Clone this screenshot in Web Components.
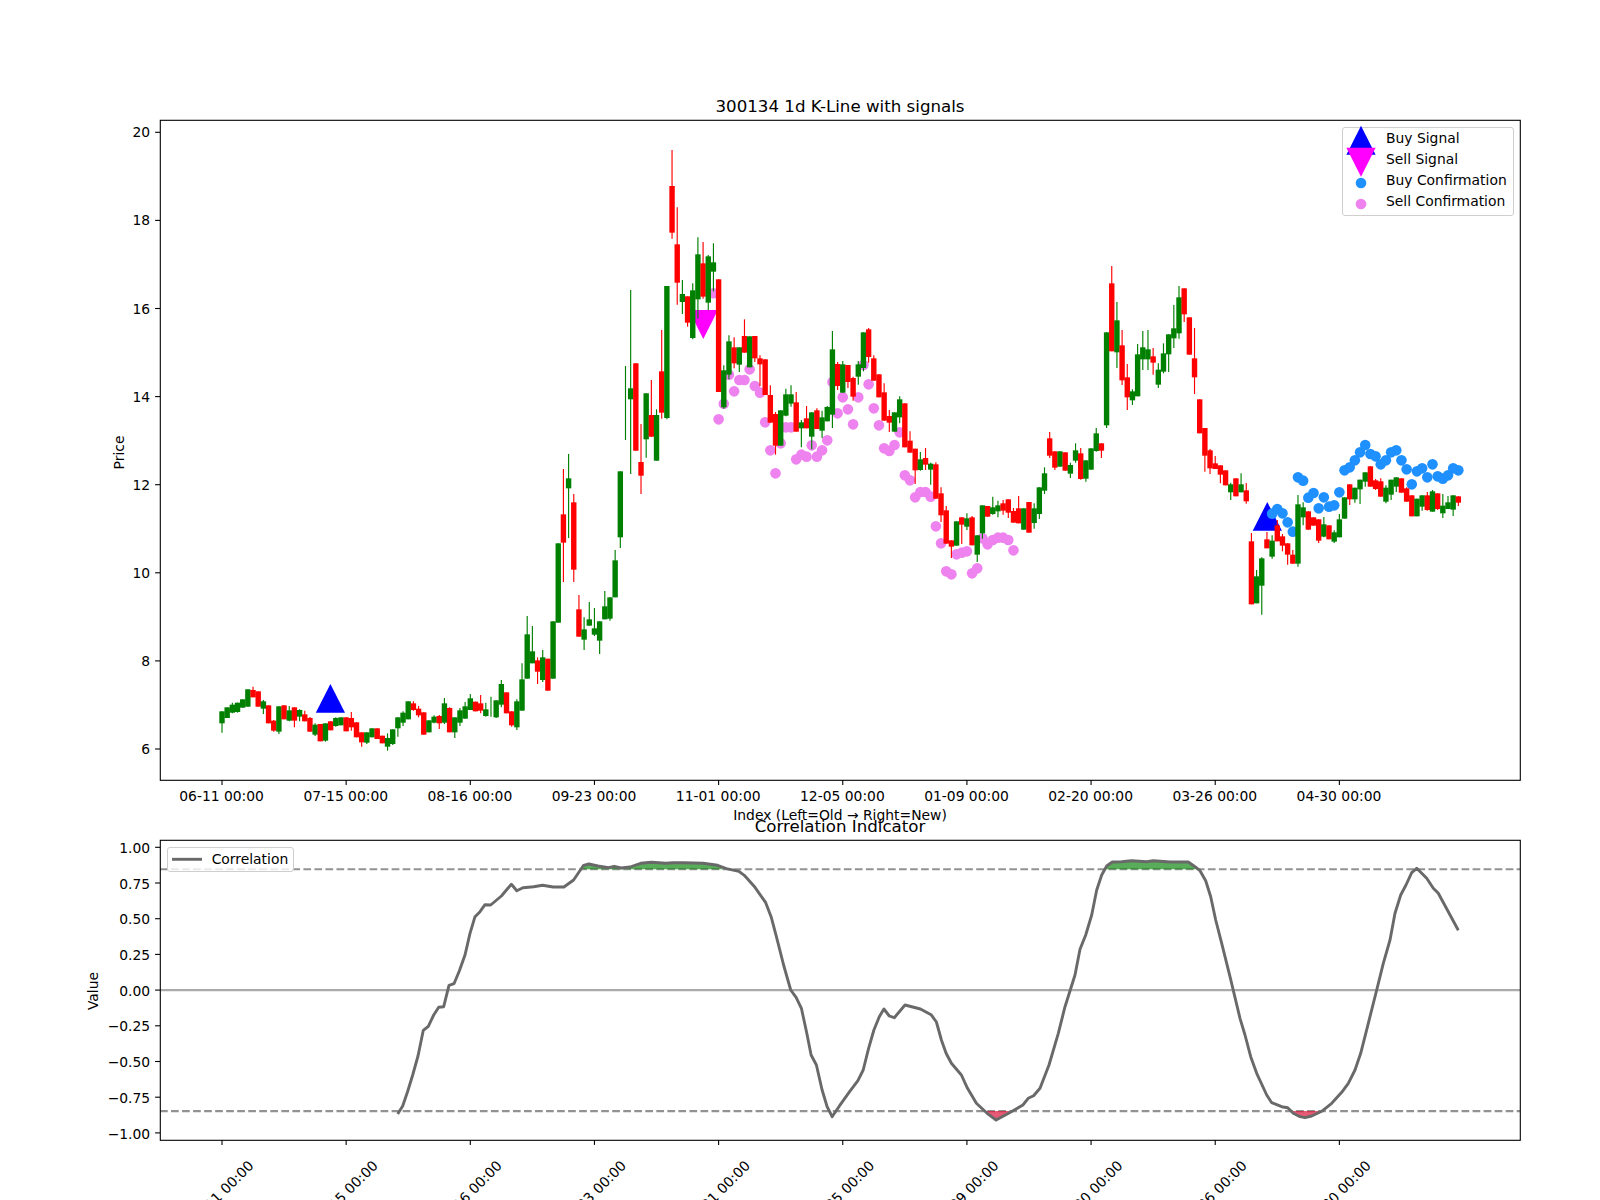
<!DOCTYPE html>
<html lang="en">
<head>
<meta charset="utf-8">
<title>300134 1d K-Line with signals</title>
<style>
html,body{margin:0;padding:0;background:#fff;overflow:hidden}
body{font-family:"DejaVu Sans",sans-serif;color:#000}
</style>
</head>
<body>
<chart-figure>
  <kline-panel>
    <chart-legend style="left:1342.3px;top:127.3px;width:171.7px;height:88.4px;--item-pad:3px">
      <legend-item marker="buy">Buy Signal</legend-item>
      <legend-item marker="sell">Sell Signal</legend-item>
      <legend-item marker="buydot">Buy Confirmation</legend-item>
      <legend-item marker="selldot">Sell Confirmation</legend-item>
    </chart-legend>
  </kline-panel>
  <corr-panel>
    <chart-legend style="left:167.3px;top:17.3px;width:126.7px;height:24.7px;--item-pad:3.7px;--legend-top:.4px">
      <legend-item marker="line">Correlation</legend-item>
    </chart-legend>
  </corr-panel>
</chart-figure>
<script>
const NS='http://www.w3.org/2000/svg';
const FONT='"DejaVu Sans",sans-serif';
const X=i=>222+5.173*i;
const TICK_LABELS=['06-11 00:00','07-15 00:00','08-16 00:00','09-23 00:00','11-01 00:00','12-05 00:00','01-09 00:00','02-20 00:00','03-26 00:00','04-30 00:00'];

/* candle data: colour, body top, body bottom, [wick top, wick bottom], read from the picture; base + z/scale */
const SEGMENTS=[
 [0,500,3,`G634 670 634 698,G622 654,G614 638 608 640,G608 636 608 638,G598 623,G568 620,R570 592 560 592,R574 620,G604 626 600 642,R616 670,R662 692 660 695,G619 695 619 702,R616 658,G631 662 618 664,R622 662 622 682,G630 650 628 664,R643 664 632 664,R654 695 651 695,G674 704 670 708,R672 724,G670 722 670 725,R664 691,G654 678 652 680,G652 676,R652 694,R654 682 636 692,R667 712,R697 727 697 740,G697 728 697 732,G685 712,R685 717,R707 730,G714 740 700 752,G688 732 688 735,G652 685 652 710,G638 668 634 678,G604 658,R610 630 604 632,R626 646 618 652,R637 704,G661 697,G650 668 646 670,R648 670 645 687,G610 668 594 672,R624 697 622 697,G652 697 652 714,G631 668 624 678,G619 656 606 656,G595 630 582 630,R605 634,R610 632 585 640,G628 648 608 650,G650 650 590 650,G601 652 601 654,G552 614 540 622,R577 640,R634 676 634 680,G604 682 598 690,G538 632 490 632,G403 536 348 536,G454 490 378 490,R481 515 472 552,G472 540 450 546,R476 572`],
 [64,400,3,`G664 836,G430 668,R343 428 207 546,G235 265 162 414,R307 509 282 546,R628 710 585 710,G688 719 652 750,G658 677 606 677,G685 704 624 708,G664 722 664 762,G619 658 573 658,G592 656 592 662,G481 592 450 592,G214 412 214 444`],
 [78,0,1,`G403 403 366 440,G388.3 399.3 290 474,R363.3 450.7,R462 475.7 424 494,G393.3 439.3 393.3 457.7,R415 436.7 380 436.7,G415 460.7 409.3 460.7`],
 [85,130,3,`R724 848 600 866,G468 864 468 868,R168 308 60 326,R343 458 232 524,G492 516 450 552,R499 578 499 590,G481 624 460 628,G373 508 322 566,R400 500 336 506,G379 518 375 540,G397 425 340 484,R448 786,G721 832 706 836,G634 734 616 748,R652 700 622 715,G652 704 652 726,R618 668 568 668,G619 712,R618 685 618 696,R685 703 676 768,R688 795,R795 878 766 878`],
 [107,280,3,`R402 497 396 524,G391 497,G343 407 326 409,G343 371 316 380,R367 455 336 455,G427 445 420 502,R415 445 378 445,G397 470 397 508,R391 447 385 447,G412 452 392 474,G381 424 378 424,G208 404 153 444,R252 318 246 330,G253 338 243 338,R255 306 255 324,R294 350 290 362,G253 290 243 314,G157 264 157 274,R148 231 144 248,R235 302 226 302,R283 352,R337 422 310 422,R408 428 390 456,G397 455,G358 412 349 430,R370 502,R482 518 454 518,R506 571 506 612,G538 570 516 572,R534 554 504 570,G551 569 548 614,R553 656 547 656,R640 706 622 726,R691 791 678 791,R781 800 781 834,G724 797,R712 734 712 792,G715 740 700 750,R712 796 708 796,G766 824 766 846`],
 [147,380,3,`G376 460 376 476,R378 410,G382 402 350 404,G376 394 362 412,R370 392 360 404,R358 398 358 414,R393 428 384 428,R385 430 348 430,G385 449,R366 458,G385 429 370 446,G322 402 322 417,G280 332 262 342,R175 227 156 234,R214 263 214 270,G214 260,R217 272,G255 281 248 294,G211 242 190 248,R220 297 204 299,G241 296 241 305,G205 269,G160 213 144 215,R190 212 190 234`],
 [171,250,3,`G247 526 247 534,R100 304 48 304,G211 307 156 354,R286 391 240 405,R382 442 342 480,G424 451 418 465,G313 439 282 439,G292 328 243 360,G298 328 240 360,R319 338 294 374,G359 404 340 414,G310 365 280 370,G253 313 253 366,G235 265 165 294,G142 250 108 266,R115 193 115 216,R202 314,R325 382 234 432,R448 550,R534 617 534 665,R601 655 597 672,R640 657 618 657,R646 674 646 700,R661 706,G703 727 698 750,R685 739,G703 727 670 727,R721 754 699 761`],
 [199,420,3,`R364 553 339 553,G469 550 450 550,G415 497 412 584,R358 385 336 385,G362 410 346 416,R316 364 300 364,R349 377 342 394,R370 404 370 434,R404 431 390 431,G253 431 225 440,G262 292 247 316,R274 329,R292 317,R298 362 298 369,G313 350 291 352,R316 358,G337 365 331 369,G298 352 282 352,G232 296,R193 238 193 255,G203 238 203 248,G179 208 179 252,G157 185 157 200,R139 200,R181 207 177 210,R184 230 175 230,G203 245 196 250,G179 224 179 240,G172 200 172 216,R175 218,R205 245 202 245,R226 289,G236 289,G226 260 226 272,R226 270 216 272,G214 275 210 275,R220 267 220 270,G257 280 222 294,G247 267 228 267,G226 269 226 288,R229 248 229 258`]
];
const candles=[];
for(const [start,base,scale,text] of SEGMENTS){
  text.split(',').forEach((entry,k)=>{
    const n=entry.slice(1).split(' ').map(v=>base+parseFloat(v)/scale);
    candles.push({i:start+k,red:entry[0]==='R',bt:n[0],bb:n[1],wt:n.length>2?n[2]:n[0],wb:n.length>2?n[3]:n[1]});
  });
}

/* Sell confirmation dots: i, y */
const sellDots=[[95,293.3]];
`418 371 284 334 300 300 268 318 338 427 511 580 490 442 442 538 524 530 496 530 511 481 306 400 352 388 433 352 255 313 385 436 505 513 495 457 586 601 652 636 636 650 739 790 874 883 823 818 814 880 865 775 793 780 773 773 780 811`
  .split(' ').forEach((z,k)=>sellDots.push([96+k,280+z/3]));
/* Buy confirmation dots */
const buyDots=[];
`281 267 280 307 335 172 182 233 219 265 232 260 256 217 151 142 121 97 75 102 109 133 121 97 91 121 148 193 154 145 172 133 169 176 166 145 151`
  .split(' ').forEach((z,k)=>buyDots.push([203+k,420+z/3]));

/* Correlation line */
const corrPts=[];
const addPts=(x0,sx,str)=>str.trim().split(/\s+/).forEach(p=>{const [a,b]=p.split(',').map(Number);corrPts.push([x0+a/sx,790+b/3]);});
[[953,1032],[968,1008],[983,964],[998,915],[1014,858],[1030,781],[1045,769],[1061,735],[1076,712],[1091,710],[1107,646],[1122,641],[1138,603],[1155,555],[1170,490],[1185,440]]
  .forEach(([a,b])=>corrPts.push([80+a/3,770+b/3]));
addPts(480,2.8,`0,365 14,344 30,345 60,318 78,295 88,283 103,302 120,293 150,290 175,286 205,291 235,291 262,270 290,226 305,222 330,228 360,233 376,229 395,234 420,231 450,220 480,217 520,220 540,218 570,218 625,220 665,226 690,236 725,244 740,256 770,292 800,338 815,380 830,440 850,525 870,600 885,622 900,655 915,730 927,795 942,825 958,900 972,950 986,980 1005,950 1035,905 1058,872 1073,840 1088,775 1103,720 1118,680 1131,657 1146,678 1160,683 1190,645 1233,657 1263,674 1278,696 1292,750 1305,790 1320,820 1348,855 1365,895 1390,940 1420,970 1445,990 1480,970 1520,945 1535,925 1550,917`);
addPts(1040,3,`0,895 27,825 55,730 75,650 105,555 120,478 137,435 155,375 170,300 185,255 200,228 217,216 245,215 275,212 320,215 340,212 390,216 445,216 465,230 480,242 497,272 512,320 527,390 545,460 570,560 600,685 615,735 632,800 650,850 680,915 695,938 725,950 743,953 760,970 780,980 795,983 815,978 845,964 875,940 905,907 925,880 945,840 962,790 985,700 1010,600 1030,520 1050,450 1065,370 1082,315 1098,285 1115,248 1130,235 1145,250 1160,265 1180,295 1195,310 1225,365 1255,421`);

function el(name,attrs,text){
  const e=document.createElementNS(NS,name);
  for(const k in attrs)e.setAttribute(k,attrs[k]);
  if(text!=null)e.textContent=text;
  return e;
}
function frameAndTicks(svg,top,bottom,yTicks,xLabels,labelDy){
  /* y ticks */
  yTicks.forEach(([label,y])=>{
    svg.append(el('line',{x1:155.1,x2:160,y1:y,y2:y,stroke:'#000','stroke-width':1.1}));
    svg.append(el('text',{x:150.2,y:y+labelDy,'text-anchor':'end'},label));
  });
  for(let k=0;k<10;k++){
    const x=X(24*k);
    svg.append(el('line',{x1:x,x2:x,y1:bottom,y2:bottom+4.9,stroke:'#000','stroke-width':1.1}));
    xLabels(svg,x,TICK_LABELS[k]);
  }
}
function frameRect(svg,top,bottom){
  svg.append(el('rect',{x:160.3,y:top+.3,width:1360,height:bottom-top,fill:'none',stroke:'#000','stroke-width':1.1}));
}
const panelStyle=`<style>
:host{display:block;position:relative}
svg{display:block;overflow:visible;font-family:${FONT};font-size:13.89px;fill:#000}
</style>`;

class ChartFigure extends HTMLElement{
  constructor(){super();
    this.attachShadow({mode:'open'}).innerHTML=`<style>
:host{display:flex;flex-direction:column;width:1600px;height:1200px;background:#fff;overflow:hidden}
</style><slot></slot>`;}
}
class KlinePanel extends HTMLElement{
  constructor(){super();
    const r=this.attachShadow({mode:'open'});
    r.innerHTML=panelStyle+`<style>:host{height:830px;flex:none}</style><svg width="1600" height="830" viewBox="0 0 1600 830"></svg><slot></slot>`;
    const svg=r.querySelector('svg');
    svg.append(el('text',{x:840,y:111.7,'text-anchor':'middle','font-size':'16.67'},'300134 1d K-Line with signals'));
    svg.append(el('text',{x:840,y:820,'text-anchor':'middle'},'Index (Left=Old → Right=New)'));
    svg.append(el('text',{x:0,y:0,'text-anchor':'middle',transform:'translate(124,452.5) rotate(-90)'},'Price'));
    /* signals */
    const tri=(x,yBase,yTip,c)=>svg.append(el('polygon',{points:`${x-14.6},${yBase} ${x+14.6},${yBase} ${x},${yTip}`,fill:c}));
    tri(330.4,712.7,684,'#0000ff');
    tri(1267.3,530.7,502,'#0000ff');
    tri(703.3,310,339,'#ff00ff');
    buyDots.forEach(([i,y])=>svg.append(el('circle',{cx:X(i),cy:y,r:5.3,fill:'#1e90ff'})));
    sellDots.forEach(([i,y])=>svg.append(el('circle',{cx:X(i),cy:y,r:5.3,fill:'#ee82ee'})));
    /* candles */
    candles.forEach(c=>{
      const col=c.red?'#ff0000':'#008000',x=X(c.i);
      svg.append(el('line',{x1:x,x2:x,y1:c.wt,y2:c.wb,stroke:col,'stroke-width':1.15}));
      if(c.bb>c.bt)svg.append(el('rect',{x:x-2.7,y:c.bt,width:5.4,height:c.bb-c.bt,fill:col}));
    });
    const ticks=[];
    for(let v=6;v<=20;v+=2)ticks.push([String(v),749-(v-6)*44.05]);
    frameAndTicks(svg,120,780,ticks,(s,x,label)=>{
      s.append(el('text',{x:x-.4,y:800.7,'text-anchor':'middle'},label));
    },5);
    frameRect(svg,120,780);
  }
}
class CorrPanel extends HTMLElement{
  constructor(){super();
    const r=this.attachShadow({mode:'open'});
    r.innerHTML=panelStyle+`<style>:host{height:370px;flex:none}</style><svg width="1600" height="370" viewBox="0 830 1600 370"></svg><slot></slot>`;
    const svg=r.querySelector('svg');
    svg.append(el('text',{x:840,y:832,'text-anchor':'middle','font-size':'16.67'},'Correlation Indicator'));
    svg.append(el('text',{x:0,y:0,'text-anchor':'middle',transform:'translate(98.3,991) rotate(-90)'},'Value'));
    const h=(y,stroke,dash)=>{const a={x1:160,x2:1520,y1:y,y2:y,stroke:stroke,'stroke-width':2.08};if(dash)a['stroke-dasharray']='7.7 3.33';svg.append(el('line',a));};
    h(869.2,'#929292',true);
    h(990.1,'#aaaaaa',false);
    h(1111.1,'#929292',true);
    /* filled zones */
    const fill=(x0,x1,yRef,col,op)=>{
      const pts=corrPts.filter(p=>p[0]>x0&&p[0]<x1);
      const d=`M${x0},${yRef} `+pts.map(p=>`L${p[0].toFixed(1)},${p[1].toFixed(1)}`).join(' ')+` L${x1},${yRef} Z`;
      svg.append(el('path',{d,fill:col,'fill-opacity':op}));
    };
    fill(583,723,869.2,'#008000',.65);
    fill(1106,1197,869.2,'#008000',.65);
    fill(986.4,1009.3,1111.1,'#dc143c',.7);
    fill(1293,1320,1111.1,'#dc143c',.7);
    svg.append(el('polyline',{points:corrPts.map(p=>p[0].toFixed(1)+','+p[1].toFixed(1)).join(' '),fill:'none',stroke:'#696969','stroke-width':2.9,'stroke-linejoin':'round'}));
    const ticks=[['1.00',1],['0.75',.75],['0.50',.5],['0.25',.25],['0.00',0],['−0.25',-.25],['−0.50',-.5],['−0.75',-.75],['−1.00',-1]].map(([l,v])=>[l,990.1-v*142.8]);
    frameAndTicks(svg,840,1140,ticks,(s,x,label)=>{
      s.append(el('text',{x:0,y:5,'text-anchor':'middle',transform:`translate(${x-1},1193) rotate(-45)`},label));
    },5.6);
    frameRect(svg,840,1140);
  }
}
class ChartLegend extends HTMLElement{
  constructor(){super();
    this.attachShadow({mode:'open'}).innerHTML=`<style>
:host{position:absolute;display:flex;flex-direction:column;box-sizing:border-box;background:rgba(255,255,255,.8);border:1px solid #cfcfcf;border-radius:3px;padding-top:var(--legend-top,0);font-family:${FONT};font-size:13.89px;color:#000;white-space:nowrap}
</style><slot></slot>`;}
}
const MARKERS={
  buy:'<polygon points="0.4,26.7 29.6,26.7 15,-2.3" fill="#0000ff"/>',
  sell:'<polygon points="0.4,-1.3 29.6,-1.3 15,27.7" fill="#ff00ff"/>',
  buydot:'<circle cx="15" cy="13" r="5.3" fill="#1e90ff"/>',
  selldot:'<circle cx="15" cy="13" r="5.3" fill="#ee82ee"/>',
  line:'<line x1="0" x2="30" y1="10.3" y2="10.3" stroke="#696969" stroke-width="2.9"/>'
};
class LegendItem extends HTMLElement{
  constructor(){super();
    this.attachShadow({mode:'open'}).innerHTML=`<style>
:host{display:flex;align-items:flex-start;height:21px;line-height:21px;padding-left:var(--item-pad,3px);gap:9.7px}
svg{display:block;overflow:visible;flex:none}
</style><svg width="30" height="21" viewBox="0 0 30 21">${MARKERS[this.getAttribute('marker')]||''}</svg><span><slot></slot></span>`;}
}
customElements.define('chart-figure',ChartFigure);
customElements.define('kline-panel',KlinePanel);
customElements.define('corr-panel',CorrPanel);
customElements.define('chart-legend',ChartLegend);
customElements.define('legend-item',LegendItem);
</script>
</body>
</html>
